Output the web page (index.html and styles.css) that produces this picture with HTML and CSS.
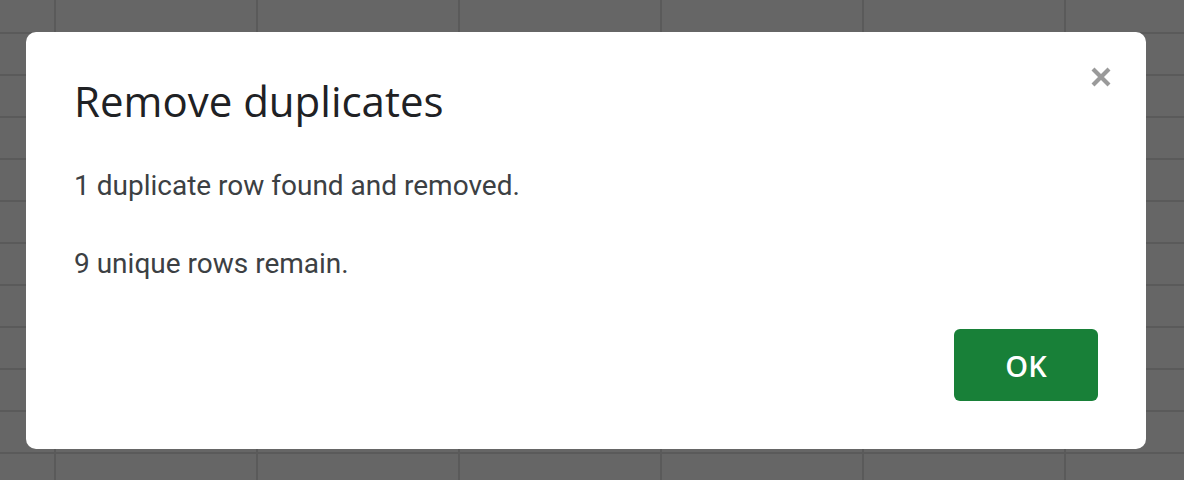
FILE: index.html
```html
<!DOCTYPE html>
<html lang="en">
<head>
<meta charset="utf-8">
<title>Remove duplicates</title>
<link rel="stylesheet" href="styles.css">
</head>
<body>
<div class="backdrop">
  <div class="dialog" role="dialog" aria-labelledby="dlg-title">
    <div class="dialog-head">
      <h1 class="dialog-title" id="dlg-title">Remove duplicates</h1>
      <button class="close-btn" aria-label="Close">
        <svg viewBox="0 0 24 24" width="24" height="24" aria-hidden="true">
          <path d="M4 4 L20 20 M20 4 L4 20" stroke="#9a9a9a" stroke-width="4.2" stroke-linecap="butt" fill="none"/>
        </svg>
      </button>
    </div>
    <div class="dialog-body">
      <p class="msg">1 duplicate row found and removed.</p>
      <p class="msg">9 unique rows remain.</p>
    </div>
    <div class="dialog-actions">
      <button class="ok-btn">OK</button>
    </div>
  </div>
</div>
</body>
</html>
```

FILE: styles.css
```css
* { box-sizing: border-box; }
html, body { margin: 0; padding: 0; }
body {
  width: 1184px;
  height: 480px;
  overflow: hidden;
  background-color: #666666;
  background-image:
    linear-gradient(to right, #5a5a5a 0, #5a5a5a 2px, transparent 2px),
    linear-gradient(to bottom, #5a5a5a 0, #5a5a5a 2px, transparent 2px);
  background-size: 202px 100%, 100% 42px;
  background-position: 54px 0, 0 32px;
  font-family: Roboto, "Liberation Sans", sans-serif;
}
.backdrop {
  padding: 32px 38px 31px 26px;
}
.dialog {
  background: #ffffff;
  border-radius: 10px;
  height: 417px;
  padding: 0 48px 48px 48px;
  display: flex;
  flex-direction: column;
}
.dialog-head {
  display: flex;
  justify-content: space-between;
  align-items: flex-start;
}
.dialog-title {
  margin: 45px 0 0 0;
  font-family: "Open Sans", Roboto, sans-serif;
  font-weight: 400;
  font-size: 42px;
  line-height: 48px;
  color: #202124;
  letter-spacing: 0;
}
.close-btn {
  margin: 32px -16px 0 0;
  width: 26px;
  height: 26px;
  padding: 0;
  border: 0;
  background: transparent;
  display: flex;
  align-items: center;
  justify-content: center;
}
.close-btn svg { filter: blur(0.6px); width: 24px; height: 24px; }
.dialog-body {
  margin-top: 41px;
  flex: 1;
}
.msg {
  margin: 0 0 38px 0;
  font-size: 28px;
  line-height: 40px;
  color: #3c4043;
}
.dialog-actions {
  display: flex;
  justify-content: flex-end;
}
.ok-btn {
  width: 144px;
  height: 72px;
  border: 0;
  border-radius: 6px;
  background: #188038;
  color: #ffffff;
  font-family: "Open Sans", Roboto, sans-serif;
  font-weight: 600;
  font-size: 29px;
  padding: 0;
}
```
